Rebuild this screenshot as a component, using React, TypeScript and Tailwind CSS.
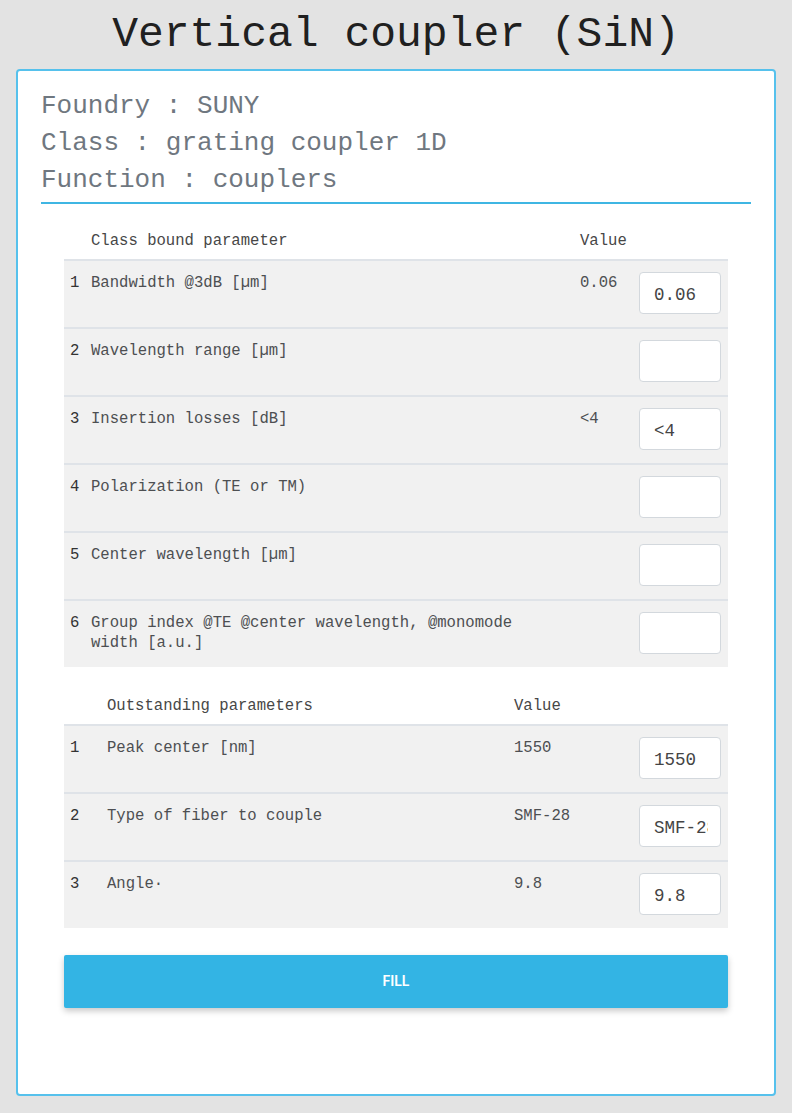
import React from "react";

const mono = "font-['Liberation_Mono',monospace]";

type Row = { n: string; label: string; value: string; input: string };

const classRows: Row[] = [
  { n: "1", label: "Bandwidth @3dB [µm]", value: "0.06", input: "0.06" },
  { n: "2", label: "Wavelength range [µm]", value: "", input: "" },
  { n: "3", label: "Insertion losses [dB]", value: "<4", input: "<4" },
  { n: "4", label: "Polarization (TE or TM)", value: "", input: "" },
  { n: "5", label: "Center wavelength [µm]", value: "", input: "" },
  {
    n: "6",
    label: "Group index @TE @center wavelength, @monomode width [a.u.]",
    value: "",
    input: "",
  },
];

const outRows: Row[] = [
  { n: "1", label: "Peak center [nm]", value: "1550", input: "1550" },
  { n: "2", label: "Type of fiber to couple", value: "SMF-28", input: "SMF-28" },
  { n: "3", label: "Angle·", value: "9.8", input: "9.8" },
];

function Input({ v }: { v: string }) {
  return (
    <input
      readOnly
      value={v}
      className={`${mono} block w-[82px] h-[42px] rounded-[4px] border border-[#d3d8dd] bg-white pl-[14px] pr-[12px] pt-[3px] text-[17.5px] text-[#444] outline-none`}
    />
  );
}

function Table({
  title,
  rows,
  numW,
  labelW,
  valueW,
}: {
  title: string;
  rows: Row[];
  numW: string;
  labelW: string;
  valueW: string;
}) {
  return (
    <div className="mx-[23px]">
      <div className="flex h-[40px] items-center pt-[6px] text-[#474747]">
        <div className={numW} />
        <div className={labelW}>{title}</div>
        <div className={valueW}>Value</div>
      </div>
      {rows.map((r) => (
        <div
          key={r.n}
          className="flex h-[68px] border-t-2 border-[#dfe3e8] bg-[#f1f1f1] text-[#4d4f52]"
        >
          <div className={`${numW} pl-[6px] pt-[12px] leading-[20px] text-[#333]`}>{r.n}</div>
          <div className={`${labelW} pr-5 pt-[12px] leading-[20px]`}>{r.label}</div>
          <div className={`${valueW} pt-[12px] leading-[20px]`}>{r.value}</div>
          <div className="pt-[11px]">
            <Input v={r.input} />
          </div>
        </div>
      ))}
    </div>
  );
}

export default function App() {
  return (
    <div className={`${mono} min-h-[1113px] w-full bg-[#e3e3e3] pb-[17px]`}>
      <div className="flex h-[69px] items-center justify-center">
        <h1 className="text-[43px] leading-none text-[#202020]">Vertical coupler (SiN)</h1>
      </div>
      <div className="mx-4 h-[1027px] rounded-[4px] border-2 border-[#56c1ec] bg-white px-[23px] pt-[17px] text-[15.6px]">
        <div className="border-b-2 border-[#3fb6e3] pb-[3px] text-[26px] leading-[37px] text-[#6f7780]">
          <div>Foundry : SUNY</div>
          <div>Class : grating coupler 1D</div>
          <div>Function : couplers</div>
        </div>
        <div className="mt-[15px]">
          <Table
            title="Class bound parameter"
            rows={classRows}
            numW="w-[27px] shrink-0"
            labelW="w-[489px] shrink-0"
            valueW="w-[59px] shrink-0"
          />
        </div>
        <div className="mt-[17px]">
          <Table
            title="Outstanding parameters"
            rows={outRows}
            numW="w-[43px] shrink-0"
            labelW="w-[407px] shrink-0"
            valueW="w-[125px] shrink-0"
          />
        </div>
        <div className="mx-[23px] mt-[27px]">
          <button className="flex h-[53px] w-full items-center justify-center rounded-[2px] bg-[#33b4e4] font-['Roboto',sans-serif] text-[14px] font-semibold text-white shadow-[0_3px_6px_rgba(0,0,0,0.22)]">
            FILL
          </button>
        </div>
      </div>
    </div>
  );
}
